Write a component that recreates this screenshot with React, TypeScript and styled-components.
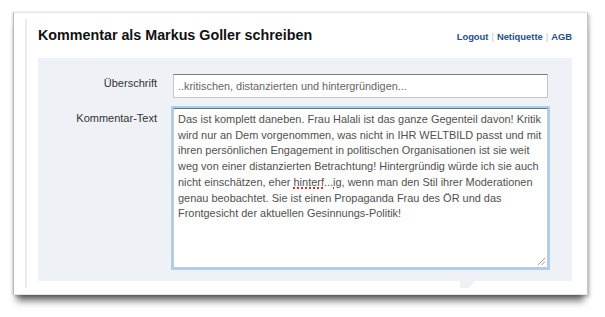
import React from "react"
import styled, { createGlobalStyle } from "styled-components"

const GlobalStyle = createGlobalStyle`
    html, body {
        margin: 0;
        padding: 0;
        background: #ffffff;
    }
    body {
        font-family: "Liberation Sans", Arial, sans-serif;
    }
`

const CommentText = () => (
    <>
        <Line>Das ist komplett daneben. Frau Halali ist das ganze Gegenteil davon! Kritik</Line>
        <Line>wird nur an Dem vorgenommen, was nicht in IHR WELTBILD passt und mit</Line>
        <Line>ihren persönlichen Engagement in politischen Organisationen ist sie weit</Line>
        <Line>weg von einer distanzierten Betrachtung! Hintergründig würde ich sie auch</Line>
        <Line>
            nicht einschätzen, eher <Misspelled>hinterf</Misspelled>...<Misspelled>ig</Misspelled>, wenn man den Stil ihrer Moderationen
        </Line>
        <Line>genau beobachtet. Sie ist einen Propaganda Frau des ÖR und das</Line>
        <Line>Frontgesicht der aktuellen Gesinnungs-Politik!</Line>
    </>
)

export default function App() {
    return (
        <Page>
            <GlobalStyle />
            <Card>
                <Frame>
                    <Header>
                        <Title>Kommentar als Markus Goller schreiben</Title>
                        <Links>
                            <Link>Logout</Link>
                            <Sep>|</Sep>
                            <Link>Netiquette</Link>
                            <Sep>|</Sep>
                            <Link>AGB</Link>
                        </Links>
                    </Header>
                    <Panel>
                        <Label $offset={3}>Überschrift</Label>
                        <Input>..kritischen, distanzierten und hintergründigen...</Input>
                        <Label $offset={4}>Kommentar-Text</Label>
                        <TextArea>
                            <CommentText />
                            <Grip width="9" height="9" viewBox="0 0 9 9">
                                <path d="M1 8 L8 1 M4.5 8 L8 4.5" stroke="#9a9a9a" strokeWidth="1" />
                            </Grip>
                        </TextArea>
                    </Panel>
                </Frame>
            </Card>
        </Page>
    )
}

const Page = styled.div`
    padding: 12px 0 0 13px;
    width: 605px;
    height: 317px;
    box-sizing: border-box;
    overflow: hidden;
`

const Card = styled.div`
    width: 575px;
    height: 283px;
    box-sizing: border-box;
    padding: 6px 15px 0 11px;
    background: #ffffff;
    border: 1px solid #e4e4e4;
    border-left-color: #b9b9b9;
    border-right-color: #c4c4c4;
    box-shadow:
        -1px 0 2px rgba(0, 0, 0, 0.12),
        2px 2px 3px rgba(0, 0, 0, 0.2),
        0 10px 7px -4px rgba(0, 0, 0, 0.55);
`

const Frame = styled.div`
    height: 269px;
    border-left: 2px solid #ebebeb;
    padding-left: 11px;
`

const Header = styled.div`
    display: flex;
    justify-content: space-between;
    align-items: baseline;
    padding-top: 8px;
    width: 534px;
`

const Title = styled.div`
    font-size: 14.3px;
    line-height: 17px;
    font-weight: 700;
    color: #111111;
`

const Links = styled.div`
    display: flex;
    align-items: baseline;
    gap: 3px;
    font-size: 9.4px;
    font-weight: 700;
`

const Link = styled.a`
    color: #1f4e8b;
    text-decoration: none;
`

const Sep = styled.span`
    color: #b8c2cc;
    font-weight: 400;
`

const Panel = styled.div`
    position: relative;
    margin-top: 14px;
    width: 534px;
    height: 223px;
    box-sizing: border-box;
    padding: 16px 0 13px;
    background: #eef2f6;
    display: grid;
    grid-template-columns: 119px 375px;
    grid-template-rows: 24px 160px;
    column-gap: 16px;
    row-gap: 10px;

    &::after {
        content: "";
        position: absolute;
        left: 422px;
        bottom: -7px;
        width: 15px;
        height: 7px;
        background: #eef2f6;
        clip-path: polygon(0 0, 100% 0, 60% 100%, 0 100%);
    }
`

const Label = styled.div<{ $offset: number }>`
    text-align: right;
    font-size: 11px;
    line-height: 13px;
    color: #333333;
    padding-top: ${(p) => p.$offset}px;
`

const Input = styled.div`
    box-sizing: border-box;
    height: 24px;
    background: #ffffff;
    border: 1px solid #c6c6c6;
    border-top-color: #7d7d7d;
    padding: 0 4px;
    font-size: 10.9px;
    line-height: 22px;
    color: #666666;
    white-space: nowrap;
    overflow: hidden;
`

const TextArea = styled.div`
    position: relative;
    box-sizing: border-box;
    height: 160px;
    background: #ffffff;
    border: 1px solid #c8c8c8;
    border-top-color: #6f6f6f;
    box-shadow: 0 0 0 2px #a9cff2;
    padding: 3px 4px;
    font-size: 10.95px;
    line-height: 15.7px;
    color: #505050;
`

const Line = styled.div`
    white-space: nowrap;
`

const Misspelled = styled.span`
    text-decoration: underline dotted #e0282b;
    text-decoration-thickness: 1.5px;
    text-underline-offset: 2px;
`

const Grip = styled.svg`
    position: absolute;
    right: 1px;
    bottom: 1px;
`
